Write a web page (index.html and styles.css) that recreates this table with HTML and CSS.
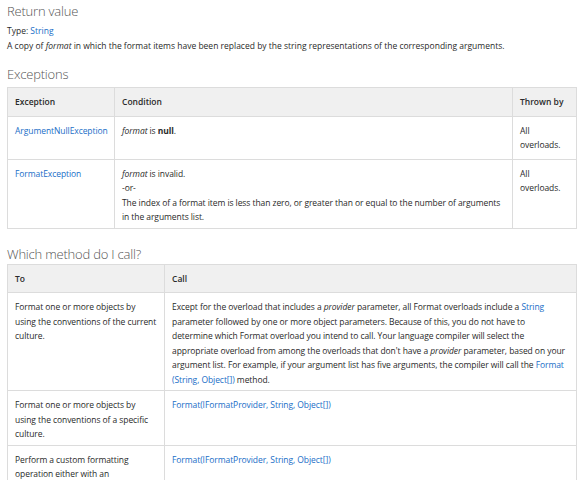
FILE: index.html
```html
<!DOCTYPE html>
<html lang="en">
<head>
    <meta charset="UTF-8">
    <title>String.Format - Return value</title>
    <link rel="stylesheet" href="styles.css">
</head>
<body>
    <h2 class="section-title first">Return value</h2>
    <p class="type-line">Type: <a href="#">String</a></p>
    <p class="desc">A copy of <em>format</em> in which the format items have been replaced by the string representations of the corresponding arguments.</p>

    <h2 class="section-title">Exceptions</h2>
    <table class="doc-table exceptions">
        <colgroup>
            <col class="c-exc">
            <col>
            <col class="c-thrown">
        </colgroup>
        <tr>
            <th>Exception</th>
            <th>Condition</th>
            <th>Thrown by</th>
        </tr>
        <tr class="row-short">
            <td><a href="#">ArgumentNullException</a></td>
            <td><em>format</em> is <strong>null</strong>.</td>
            <td>All overloads.</td>
        </tr>
        <tr>
            <td><a href="#">FormatException</a></td>
            <td><em>format</em> is invalid.<br>-or-<br>The index of a format item is less than zero, or greater than or equal to the number of arguments in the arguments list.</td>
            <td>All overloads.</td>
        </tr>
    </table>

    <h2 class="section-title methods-title">Which method do I call?</h2>
    <table class="doc-table methods">
        <colgroup>
            <col class="c-to">
            <col>
        </colgroup>
        <tr>
            <th>To</th>
            <th>Call</th>
        </tr>
        <tr>
            <td>Format one or more objects by using the conventions of the current culture.</td>
            <td class="call">Except for the overload that includes a <em>provider</em> parameter, all Format overloads include a <a href="#">String</a> parameter followed by one or more object parameters. Because of this, you do not have to determine which Format overload you intend to call. Your language compiler will select the appropriate overload from among the overloads that don't have a <em>provider</em> parameter, based on your argument list. For example, if your argument list has five arguments, the compiler will call the <a href="#">Format (String, Object[])</a> method.</td>
        </tr>
        <tr>
            <td>Format one or more objects by using the conventions of a specific culture.</td>
            <td class="call"><a href="#">Format(IFormatProvider, String, Object[])</a></td>
        </tr>
        <tr>
            <td>Perform a custom formatting operation either with an ICustomFormatter implementation or an IFormattable implementation.</td>
            <td class="call"><a href="#">Format(IFormatProvider, String, Object[])</a></td>
        </tr>
    </table>
</body>
</html>
```

FILE: styles.css
```css
body {
    margin: 0;
    padding: 0 7px;
    font-family: "Open Sans", "Noto Sans", sans-serif;
    font-size: 8.5px;
    line-height: 14.5px;
    color: #2a2a2a;
    background: #fff;
    overflow: hidden;
}

a {
    color: #1a6ec7;
    text-decoration: none;
}

p {
    margin: 0;
}

.section-title {
    margin: 11px 0 3px;
    font-size: 13px;
    line-height: 20px;
    font-weight: 300;
    letter-spacing: -0.2px;
    color: #555;
}

.section-title.first {
    margin-top: 1px;
}

.section-title.methods-title {
    margin: 15px 0 0;
}

.type-line {
    margin-top: 3px;
}

.doc-table {
    width: 570px;
    border-collapse: collapse;
    table-layout: fixed;
}

.doc-table th,
.doc-table td {
    border: 1px solid #dcdcdc;
    text-align: left;
    vertical-align: top;
    padding: 7px 7px 3px;
}

.doc-table td {
    letter-spacing: -0.07px;
}

.doc-table td.call {
    padding-right: 10px;
}

.doc-table th {
    background: #f0f0f0;
    font-weight: 600;
    padding: 7px 7px 6px;
}

.row-short td {
    padding-bottom: 6px;
}

.c-exc { width: 107px; }
.c-thrown { width: 64px; }
.c-to { width: 157px; }
```
